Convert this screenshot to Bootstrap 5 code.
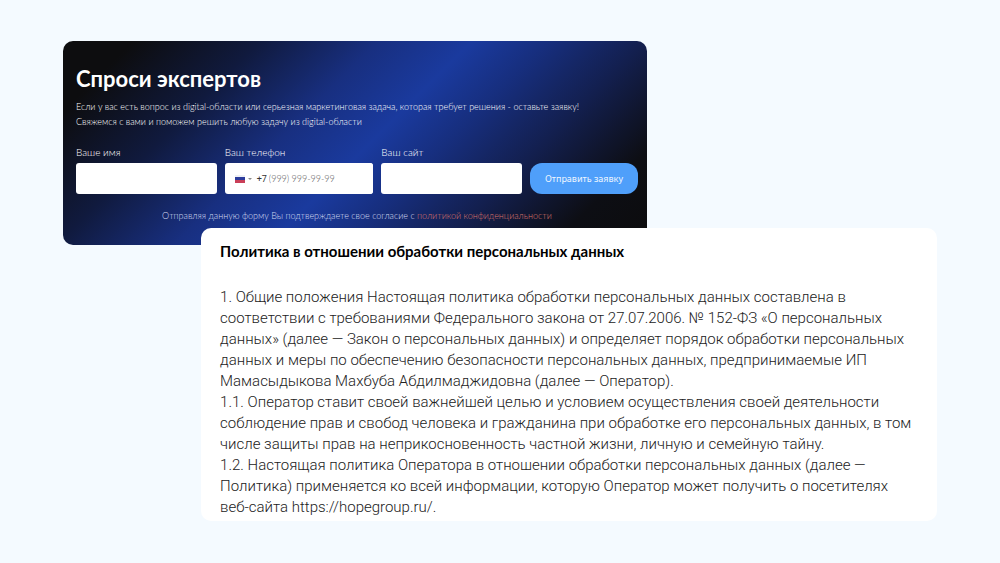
<!DOCTYPE html>
<html lang="ru">
<head>
<meta charset="utf-8">
<meta name="viewport" content="width=device-width, initial-scale=1">
<title>Спроси экспертов</title>
<link href="https://cdn.jsdelivr.net/npm/bootstrap@5.3.0/dist/css/bootstrap.min.css" rel="stylesheet">
<style>
  body { background: #f4faff; font-family: Lato, sans-serif; color: #111; }
  .page { padding: 41px 63px; }
  .ask { width: 66.8%; padding: 24px 9px 23px 13px; border-radius: 10px; color: #fff;
    background: linear-gradient(135deg, #0d0d0f 9%, #101a3e 25%, #182f80 40%, #1a3a9e 52%, #172f80 61%, #131f4e 74%, #0d0e14 88%, #0c0c0d); }
  .ask h1 { font-size: 22px; line-height: 28px; font-weight: 700; margin-bottom: 6px; }
  .intro { font-size: 9px; line-height: 15px; font-weight: 300; color: #fff; margin-bottom: 16px; }
  .fields { display: grid; grid-template-columns: 141fr 149fr 141fr 108fr; column-gap: 8px; }
  .fields label { display: block; font-size: 10px; line-height: 14px; font-weight: 300; margin-bottom: 4px; color: #fff; }
  .fields .form-control { min-height: 31px; height: 31px; border: 0; border-radius: 3px; padding: 0 8px; font-size: 9px; background: #fff; }
  .phone { height: 31px; border-radius: 3px; padding-left: 10px; color: #333; font: 9px Roboto, sans-serif; }
  .phone .form-control { padding: 0 0 0 2px; min-width: 0; font-family: Lato, sans-serif; font-weight: 300; }
  .phone .form-control::placeholder { color: #555; opacity: 1; }
  .send { height: 31px; border-radius: 12px; background: #4f9ffa; color: #eef6ff; padding: 0; font: 9px "Noto Sans", sans-serif; }
  .send:hover { background: #3c8eec; color: #fff; }
  .consent { font: 300 9px/12px Lato, sans-serif; color: #d5dcf2; margin: 16px 0 0; }
  .consent a { color: #d9736a; }
  .policy { width: 84.2%; margin-left: auto; margin-top: -17px; padding: 12px 12px 3px 19px; border-radius: 10px; }
  .policy h2 { font-size: 15px; line-height: 22px; font-weight: 700; color: #000; margin-bottom: 25px; }
  .policy p { font: 300 15px/21px Roboto, sans-serif; color: #222; margin: 0; }
</style>
</head>
<body>
<main class="page">
  <section class="ask">
    <h1>Спроси экспертов</h1>
    <p class="intro">Если у вас есть вопрос из digital-области или серьезная маркетинговая задача, которая требует решения - оставьте заявку!<br>Свяжемся с вами и поможем решить любую задачу из digital-области</p>
    <form>
      <div class="fields align-items-end">
        <div><label for="name">Ваше имя</label><input id="name" type="text" class="form-control"></div>
        <div>
          <label for="phone">Ваш телефон</label>
          <div class="phone d-flex align-items-center bg-white">
            <svg class="flex-shrink-0" width="22" height="10" viewBox="0 0 22 10" aria-hidden="true">
              <path fill="#eef0f4" d="M0 1h10v3H0z"/><path fill="#2c3c9c" d="M0 3h10v4H0z"/><path fill="#c93f58" d="M0 6h10v3H0z"/><path fill="#888" d="M13 4h4l-2 2z"/>
            </svg>
            <span>+7</span>
            <input id="phone" type="tel" class="form-control" placeholder="(999) 999-99-99">
          </div>
        </div>
        <div><label for="site">Ваш сайт</label><input id="site" type="text" class="form-control"></div>
        <button type="submit" class="btn send">Отправить заявку</button>
      </div>
      <p class="consent text-center">Отправляя данную форму Вы подтверждаете свое согласие с <a href="#policy" class="text-decoration-none">политикой конфиденциальности</a></p>
    </form>
  </section>
  <section id="policy" class="policy bg-white position-relative">
    <h2>Политика в отношении обработки персональных данных</h2>
    <p>1. Общие положения Настоящая политика обработки персональных данных составлена в<br>
    соответствии с требованиями Федерального закона от 27.07.2006. № 152-ФЗ «О персональных<br>
    данных» (далее — Закон о персональных данных) и определяет порядок обработки персональных<br>
    данных и меры по обеспечению безопасности персональных данных, предпринимаемые ИП<br>
    Мамасыдыкова Махбуба Абдилмаджидовна (далее — Оператор).</p>
    <p>1.1. Оператор ставит своей важнейшей целью и условием осуществления своей деятельности<br>
    соблюдение прав и свобод человека и гражданина при обработке его персональных данных, в том<br>
    числе защиты прав на неприкосновенность частной жизни, личную и семейную тайну.</p>
    <p>1.2. Настоящая политика Оператора в отношении обработки персональных данных (далее —<br>
    Политика) применяется ко всей информации, которую Оператор может получить о посетителях<br>
    веб-сайта https://hopegroup.ru/.</p>
  </section>
</main>
<script src="https://cdn.jsdelivr.net/npm/bootstrap@5.3.0/dist/js/bootstrap.bundle.min.js"></script>
</body>
</html>
